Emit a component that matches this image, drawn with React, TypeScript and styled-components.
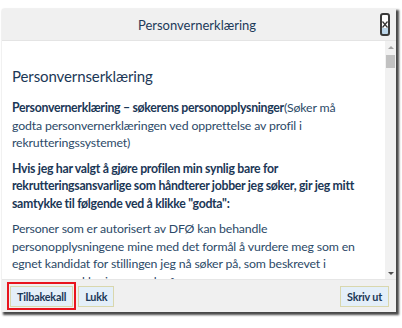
import React from 'react'
import styled, { createGlobalStyle } from 'styled-components'

const GlobalStyle = createGlobalStyle`
  html, body {
    margin: 0;
    padding: 0;
    background: #ffffff;
  }
  body {
    font-family: Lato, 'Noto Sans', sans-serif;
  }
`

const Page = styled.div`
  padding: 9px 0 0 2px;
  width: 402px;
  height: 328px;
  box-sizing: border-box;
`

const Dialog = styled.div`
  width: 394px;
  height: 303px;
  display: flex;
  flex-direction: column;
  background: #ffffff;
  box-shadow: 2px 2px 2px 1px rgba(40, 40, 40, 0.85);
`

const Header = styled.div`
  height: 31px;
  display: flex;
  align-items: center;
  padding: 0 6px 0 12px;
  background: #f0f0f0;
  border-bottom: 1px solid #e4e4e4;
`

const Title = styled.div`
  flex: 1;
  text-align: center;
  font-size: 13px;
  color: #1d3a5a;
`

const CloseButton = styled.button`
  width: 10px;
  height: 23px;
  padding: 0;
  border: 2px solid #3a3a3a;
  border-radius: 3px;
  background: linear-gradient(#ffffff 0 68%, #bcd6ea 68% 100%);
  display: flex;
  align-items: center;
  justify-content: center;
`

const Body = styled.div`
  flex: 1;
  display: flex;
  min-height: 0;
`

const Content = styled.div`
  flex: 1;
  overflow: hidden;
  padding: 25px 17px 0 10px;
  color: #1d3a5a;
  font-size: 12.3px;
  letter-spacing: -0.15px;
  line-height: 17.5px;
`

const Heading = styled.h2`
  margin: 0 0 13px;
  font-size: 15px;
  font-weight: 400;
  letter-spacing: -0.1px;
  line-height: 20px;
  color: #1b3756;
`

const Paragraph = styled.p<{ $bold?: boolean }>`
  margin: 0 0 8px;
  font-weight: ${({ $bold }) => ($bold ? 700 : 400)};
  letter-spacing: ${({ $bold }) => ($bold ? '-0.3px' : '-0.15px')};
  color: ${({ $bold }) => ($bold ? '#1b3756' : '#2c4a68')};
`

const Strong = styled.span`
  font-weight: 700;
  letter-spacing: -0.3px;
  color: #1b3756;
`

const Scrollbar = styled.div`
  width: 11px;
  display: flex;
  flex-direction: column;
  align-items: center;
  background: #f1f1f1;
`

const Arrow = styled.div<{ $down?: boolean }>`
  height: 12px;
  width: 11px;
  display: flex;
  align-items: center;
  justify-content: center;

  &::after {
    content: '';
    border-left: 3px solid transparent;
    border-right: 3px solid transparent;
    ${({ $down }) =>
      $down ? 'border-top: 3px solid #505050;' : 'border-bottom: 3px solid #a3a3a3;'}
  }
`

const Thumb = styled.div`
  width: 9px;
  height: 13px;
  margin-top: 2px;
  background: #c1c1c1;
`

const Track = styled.div`
  flex: 1;
`

const Footer = styled.div`
  height: 32px;
  display: flex;
  align-items: center;
  gap: 2px;
  padding: 0 7px 0 5px;
  background: #f0f0f0;
  border-top: 1px solid #e6e6e6;
`

const ButtonFrame = styled.div<{ $focused?: boolean }>`
  padding: 1px;
  border: 2px solid ${({ $focused }) => ($focused ? '#e8141e' : 'transparent')};
`

const Button = styled.button`
  height: 21px;
  padding: 0 6px;
  background: #e4eff9;
  border: 1px solid #d9d7ad;
  color: #1b3756;
  font-family: Lato, 'Noto Sans', sans-serif;
  font-size: 10.8px;
  letter-spacing: -0.2px;
  font-weight: 700;
`

const Spacer = styled.div`
  flex: 1;
`

export default function App() {
  return (
    <Page>
      <GlobalStyle />
      <Dialog>
        <Header>
          <Title>Personvernerklæring</Title>
          <CloseButton aria-label="Lukk">
            <svg width="6" height="7" viewBox="0 0 6 7">
              <path d="M0.5 0.5 L5.5 6.5 M5.5 0.5 L0.5 6.5" stroke="#333" strokeWidth="1.2" />
            </svg>
          </CloseButton>
        </Header>
        <Body>
          <Content>
            <Heading>Personvernserklæring</Heading>
            <Paragraph>
              <Strong>Personvernerklæring – søkerens personopplysninger</Strong>(Søker må godta
              personvernerklæringen ved opprettelse av profil i rekrutteringssystemet)
            </Paragraph>
            <Paragraph $bold>
              Hvis jeg har valgt å gjøre profilen min synlig bare for rekrutteringsansvarlige som
              håndterer jobber jeg søker, gir jeg mitt samtykke til følgende ved å klikke "godta":
            </Paragraph>
            <Paragraph>
              Personer som er autorisert av DFØ kan behandle personopplysningene mine med det formål
              å vurdere meg som en egnet kandidat for stillingen jeg nå søker på, som beskrevet i
              personvernerklæringen nedenfor.
            </Paragraph>
          </Content>
          <Scrollbar>
            <Arrow />
            <Thumb />
            <Track />
            <Arrow $down />
          </Scrollbar>
        </Body>
        <Footer>
          <ButtonFrame $focused>
            <Button>Tilbakekall</Button>
          </ButtonFrame>
          <Button>Lukk</Button>
          <Spacer />
          <Button>Skriv ut</Button>
        </Footer>
      </Dialog>
    </Page>
  )
}
